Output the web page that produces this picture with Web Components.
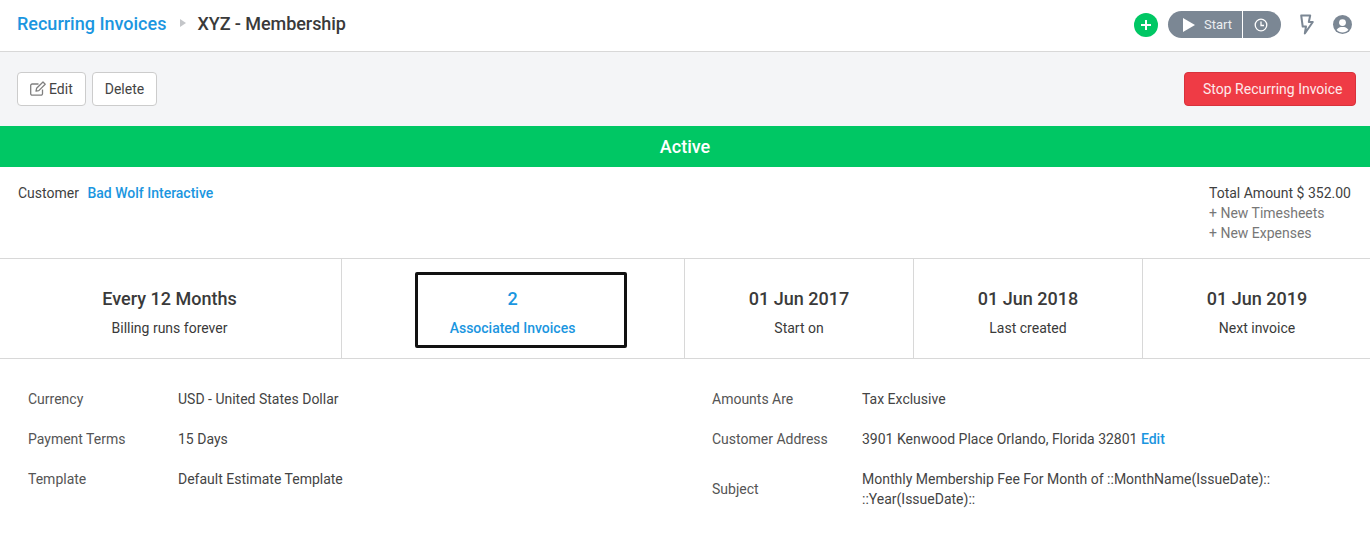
<!DOCTYPE html>
<html>
<head>
<meta charset="utf-8">
<style>
  html, body { margin: 0; padding: 0; background: #fff; }
  body { font-family: Roboto, "Liberation Sans", sans-serif; color: #333; width: 1370px; height: 540px; overflow: hidden; }
</style>
</head>
<body>
<app-header></app-header>
<app-toolbar></app-toolbar>
<status-bar>Active</status-bar>
<customer-row></customer-row>
<stat-row>
  <stat-cell value="Every 12 Months" label="Billing runs forever" style="padding-right:2px"></stat-cell>
  <stat-cell value="2" label="Associated Invoices" active style="padding-right:1px"></stat-cell>
  <stat-cell value="01 Jun 2017" label="Start on"></stat-cell>
  <stat-cell value="01 Jun 2018" label="Last created"></stat-cell>
  <stat-cell value="01 Jun 2019" label="Next invoice" style="padding-left:1px"></stat-cell>
</stat-row>
<detail-grid>
  <detail-item label="Currency">USD - United States Dollar</detail-item>
  <detail-item label="Amounts Are">Tax Exclusive</detail-item>
  <detail-item label="Payment Terms">15 Days</detail-item>
  <detail-item label="Customer Address">3901 Kenwood Place Orlando, Florida 32801 <a style="color:#1b96e0;font-weight:500">Edit</a></detail-item>
  <detail-item label="Template">Default Estimate Template</detail-item>
  <detail-item label="Subject">Monthly Membership Fee For Month of ::MonthName(IssueDate):: ::Year(IssueDate)::</detail-item>
</detail-grid>
<script>
const define = (name, html) => {
  customElements.define(name, class extends HTMLElement {
    constructor() {
      super();
      this.attachShadow({ mode: 'open' });
    }
    connectedCallback() {
      this.shadowRoot.innerHTML = html(this);
    }
  });
};

define('app-header', () => `
  <style>
    :host { display: flex; align-items: center; height: 46px; padding: 0 18px 5px 17px; border-bottom: 1px solid #d8d8d8; }
    .crumb { font-size: 18px; font-weight: 500; color: #1b96e0; }
    .arrow { width: 0; height: 0; border-left: 6px solid #c4c6c9; border-top: 4.5px solid transparent; border-bottom: 4.5px solid transparent; margin: 0 11px 0 14px; }
    .title { font-size: 18px; font-weight: 500; color: #3a3a3a; letter-spacing: -0.06px; }
    .right { margin-left: auto; margin-top: 3px; display: flex; align-items: center; }
    .plus { width: 24px; height: 24px; border-radius: 50%; background: #00c764; display: flex; align-items: center; justify-content: center; margin-right: 10px; }
    .timer { display: flex; height: 27px; width: 113px; border-radius: 14px; background: #7b8794; overflow: hidden; }
    .start { display: flex; align-items: center; width: 75px; padding-left: 15px; box-sizing: border-box; border-right: 1px solid #fff; font-size: 13px; color: #eceef0; }
    .start svg { margin-right: 9px; }
    .clock { display: flex; align-items: center; padding-left: 11px; }
    .bolt { margin-left: 19px; }
    .user { margin-left: 19px; }
  </style>
  <span class="crumb">Recurring Invoices</span>
  <span class="arrow"></span>
  <span class="title">XYZ - Membership</span>
  <div class="right">
    <span class="plus"><svg width="12" height="12" viewBox="0 0 12 12"><path d="M6 1v10M1 6h10" stroke="#fff" stroke-width="2"/></svg></span>
    <div class="timer">
      <span class="start"><svg width="12" height="14" viewBox="0 0 12 14"><path d="M0 0L12 7 0 14z" fill="#fff"/></svg>Start</span>
      <span class="clock"><svg width="14" height="14" viewBox="0 0 14 14" fill="none" stroke="#fff" stroke-width="1.300"><circle cx="7" cy="7" r="5.800"/><path d="M7 3.500V7.500H10"/></svg></span>
    </div>
    <svg class="bolt" width="14" height="21" viewBox="0 0 14 21" fill="none" stroke="#7b8794" stroke-width="2" stroke-linejoin="round"><path d="M1.200 1.500h9L8.800 8h4L4.800 19.500 6 12.500H2.700z"/></svg>
    <svg class="user" width="19" height="19" viewBox="0 0 20 20"><circle cx="10" cy="10" r="10" fill="#7b8794"/><circle cx="10" cy="8" r="3.600" fill="#fff"/><path d="M3.800 15.500c1.500-2.500 3.700-3 6.200-3s4.700.5 6.200 3c-1.500 1.800-3.800 2.900-6.200 2.900s-4.700-1.100-6.200-2.900z" fill="#fff"/></svg>
  </div>
`);

define('app-toolbar', () => `
  <style>
    :host { display: flex; align-items: center; height: 74px; padding: 0 14px 0 17px; background: #f4f5f7; gap: 6px; }
    button { font: 14px Roboto, sans-serif; height: 34px; padding: 0 12px; background: #fff; border: 1px solid #ccc; border-radius: 4px; color: #444; display: flex; align-items: center; gap: 3px; }
    .stop { margin-left: auto; background: #ef3b45; border-color: #d8323c; color: #fde9ea; width: 172px; justify-content: flex-start; padding: 0 0 0 18px; }
    .edit svg { margin-top: -1px; }
  </style>
  <button class="edit"><svg width="16" height="15" viewBox="0 0 16 15" fill="none" stroke="#808080" stroke-width="1.300" stroke-linejoin="round"><path d="M12.500 8.500v4.200a1.500 1.500 0 0 1-1.500 1.500H2.200a1.500 1.500 0 0 1-1.500-1.500V4.500A1.500 1.500 0 0 1 2.200 3H8.500"/><path d="M6 10.200l.6-2.900L13 1l2.200 2.200-6.400 6.400z"/></svg>Edit</button>
  <button>Delete</button>
  <button class="stop">Stop Recurring Invoice</button>
`);

define('status-bar', () => `
  <style>
    :host { display: flex; align-items: center; justify-content: center; height: 41px; background: #00c764; color: #fff; font-size: 18px; font-weight: 500; }
  </style>
  <slot></slot>
`);

define('customer-row', () => `
  <style>
    :host { display: flex; justify-content: space-between; height: 91px; border-bottom: 1px solid #d8d8d8; padding: 0 19px 0 18px; font-size: 14px; line-height: 20px; color: #3f3f3f; }
    .left { padding-top: 16px; }
    a { color: #1b96e0; font-weight: 500; margin-left: 5px; }
    .right { padding-top: 16px; }
    .muted { color: #777; }
  </style>
  <div class="left">Customer <a>Bad Wolf Interactive</a></div>
  <div class="right">Total Amount $ 352.00<div class="muted">+ New Timesheets</div><div class="muted">+ New Expenses</div></div>
`);

define('stat-row', () => `
  <style>
    :host { display: grid; grid-template-columns: 342px 343px 229px 229px 227px; height: 99px; border-bottom: 1px solid #d8d8d8; }
    ::slotted(stat-cell:not(:last-child)) { border-right: 1px solid #d8d8d8; }
  </style>
  <slot></slot>
`);

define('stat-cell', (el) => {
  const active = el.hasAttribute('active');
  return `
  <style>
    :host { display: flex; align-items: center; justify-content: center; box-sizing: border-box; min-width: 0; position: relative; padding-top: 8px; }
    .box { display: flex; flex-direction: column; align-items: center; color: ${active ? '#1b96e0' : '#3a3a3a'}; }
    .v { font-size: 18px; font-weight: 500; line-height: 22px; }
    .l { font-size: 14px; line-height: 18px; margin-top: 9px; ${active ? 'font-weight: 500;' : ''} }
    .focus { position: absolute; left: 73px; top: 13px; width: 212px; height: 76px; box-sizing: border-box; border: 3px solid #111; border-radius: 2px; }
  </style>
  ${active ? '<div class="focus"></div>' : ''}
  <div class="box"><div class="v">${el.getAttribute('value')}</div><div class="l">${el.getAttribute('label')}</div></div>`;
});

define('detail-grid', () => `
  <style>
    :host { display: grid; grid-template-columns: 684px 1fr; align-items: start; padding: 20px 0 0 28px; font-size: 14px; }
  </style>
  <slot></slot>
`);

define('detail-item', (el) => `
  <style>
    :host { display: flex; align-items: center; padding: 10px 0; line-height: 20px; }
    .k { width: 150px; flex: none; color: #555; }
    .val { width: 420px; color: #444; }
  </style>
  <div class="k">${el.getAttribute('label')}</div>
  <div class="val"><slot></slot></div>
`);
</script>
</body>
</html>
